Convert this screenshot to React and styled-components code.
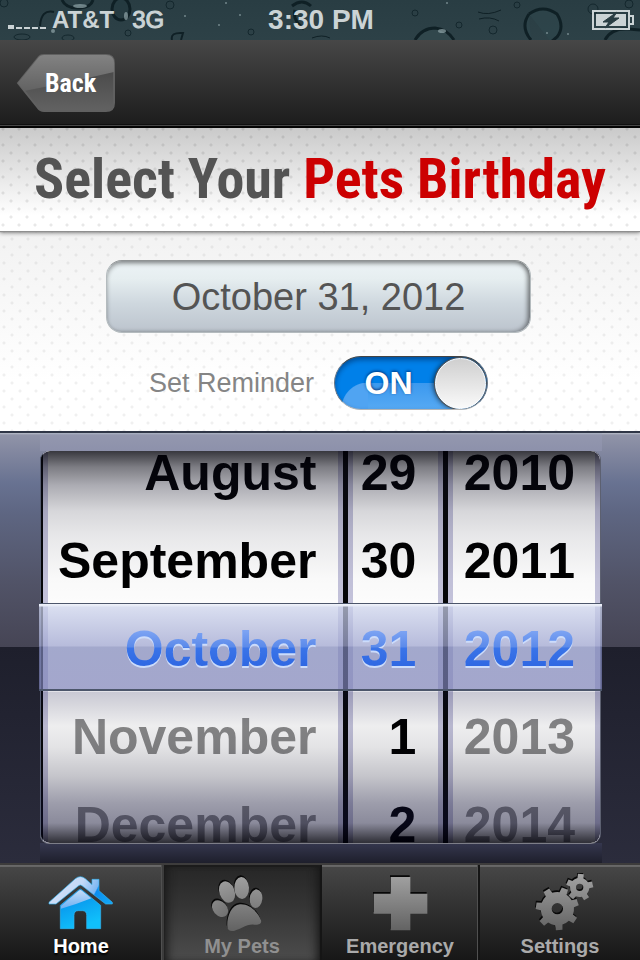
import React, { useState } from "react";
import styled, { createGlobalStyle, css } from "styled-components";

const GlobalStyle = createGlobalStyle`
  *, *::before, *::after { box-sizing: border-box; }
  body { margin: 0; background: #1b1b1b; font-family: "Liberation Sans", Arial, sans-serif; }
  button, input { font-family: inherit; margin: 0; padding: 0; border: 0; }
`;

const condensed = `"Roboto Condensed", "Open Sans Condensed", "Arial Narrow", "Liberation Sans", sans-serif`;

const Screen = styled.div`
  display: flex;
  flex-direction: column;
  min-height: 100vh;
  overflow: hidden;
`;

/* ---------- status bar ---------- */

const StatusBar = styled.div`
  position: relative;
  display: grid;
  grid-template-columns: 1fr auto 1fr;
  align-items: center;
  height: 40px;
  padding: 0 6px 0 8px;
  background: linear-gradient(#293d43, #2d4147);
  color: #cbd3d5;
  font-weight: bold;
  overflow: hidden;
`;

const Droplets = styled.svg`
  position: absolute;
  inset: 0;
  width: 100%;
  height: 100%;
`;

const Carrier = styled.div`
  position: relative;
  display: flex;
  align-items: center;
  gap: 6px;
  font-size: 24px;
`;

const Network = styled.span`
  margin-left: 12px;
  font-weight: normal;
  -webkit-text-stroke: 1px currentColor;
`;

const Signal = styled.div`
  display: flex;
  align-items: flex-end;
  gap: 2px;
  height: 18px;
`;

const SignalBar = styled.i`
  width: 6px;
  height: ${(p) => (p.$on ? 4 : 2)}px;
  background: #cbd3d5;
`;

const Clock = styled.div`
  position: relative;
  font-size: 28px;
  line-height: 40px;
`;

const Battery = styled.svg`
  position: relative;
  justify-self: end;
  width: 42px;
  height: 20px;
`;

/* ---------- navigation ---------- */

const NavBar = styled.header`
  display: flex;
  align-items: center;
  height: 88px;
  padding: 0 16px 3px;
  background: linear-gradient(#474747, #333 45%, #1b1b1b);
  box-shadow: inset 0 -2px #050505, inset 0 -3px #484848, inset 0 -4px #101010;
`;

const BackButton = styled.button`
  position: relative;
  width: 99px;
  height: 58px;
  background: none;
  color: #fff;
  font: bold 26px/58px ${condensed};
  cursor: pointer;
`;

const BackShape = styled.svg`
  position: absolute;
  inset: 0;
  width: 100%;
  height: 100%;
`;

const BackText = styled.span`
  position: relative;
  display: block;
  padding-left: 10px;
`;

/* ---------- heading and form ---------- */

const dots = (alpha, x, y) => css`
  background-image:
    radial-gradient(circle at 8px 8px, rgba(0, 0, 0, ${alpha}) 1px, transparent 2px),
    radial-gradient(circle at 8px 8px, rgba(0, 0, 0, ${alpha}) 1px, transparent 2px),
    ${(p) => p.$shade};
  background-size: 16px 16px, 16px 16px, 100% 100%;
  background-position: ${x}px ${y}px, ${x + 8}px ${y + 8}px, 0 0;
`;

const TitleBand = styled.div`
  ${dots(0.09, 3, 1)}
  position: relative;
  display: flex;
  justify-content: center;
  height: 103px;
  box-shadow: 0 1px 1px #8f8f8f, 0 2px 4px rgba(0, 0, 0, 0.45);
`;

const Title = styled.h1`
  margin: 0;
  color: #545454;
  font: bold 56px/103px ${condensed};
  white-space: nowrap;
`;

const Accent = styled.span`
  color: #cc0001;
`;

const Form = styled.main`
  ${dots(0.06, 4, 0)}
  display: flex;
  flex-direction: column;
  align-items: center;
  gap: 23px;
  padding: 29px 19px 21px 16px;
`;

const DateField = styled.input`
  width: 425px;
  max-width: 100%;
  height: 73px;
  padding-top: 2px;
  border-radius: 16px;
  border: 1px solid #b4bbbe;
  border-top-color: #8f9394;
  background: linear-gradient(#ecf3f6, #e6eef0 25%, #ced7de 60%, #bcc4cd);
  box-shadow: inset 0 3px 4px rgba(0, 0, 0, 0.3), inset -3px 0 4px rgba(0, 0, 0, 0.35);
  color: #545454;
  font-size: 38px;
  text-align: center;
  outline: 0;
`;

const ReminderRow = styled.div`
  display: flex;
  align-items: center;
  gap: 20px;
`;

const ReminderLabel = styled.label`
  color: #858585;
  font-size: 27px;
  line-height: 54px;
`;

const Toggle = styled.input`
  appearance: none;
  display: flex;
  align-items: center;
  justify-content: flex-end;
  width: 154px;
  height: 54px;
  padding: 1px;
  border-radius: 27px;
  border: 1px solid #6c7683;
  border-top-color: #444;
  border-bottom-color: #b5b5b5;
  overflow: hidden;
  background:
    radial-gradient(circle at 100% 100%, #50a4f2 26px, transparent 27px) 7px 26px / 26px 26px no-repeat,
    linear-gradient(#3b99ef, #56a9f3) 33px 26px / 100% 26px no-repeat,
    #0080e9;
  box-shadow: inset 0 3px 5px rgba(0, 20, 60, 0.45);
  cursor: pointer;

  &::before {
    content: "${(p) => (p.checked ? "ON" : "OFF")}";
    flex: 1;
    padding-left: 6px;
    color: #fff;
    font-size: 32px;
    font-weight: bold;
    text-align: center;
    text-shadow: 0 -1px 3px rgba(0, 30, 90, 0.8);
  }
  &::after {
    content: "";
    width: 51px;
    height: 51px;
    border-radius: 50%;
    border: 1px solid #fff;
    background: linear-gradient(#cfcfcf, #fafafa);
    box-shadow: 0 0 0 1px #555, -2px 0 5px rgba(0, 0, 0, 0.6);
  }
`;

/* ---------- date picker ---------- */

const Picker = styled.section`
  flex: 1 0 auto;
  display: flex;
  padding: 0 38px 0 40px;
  border-top: 2px solid #2f3646;
  background: linear-gradient(
    #b9bfcb 0,
    #9094a8 2px,
    #8388a0 18px,
    #687291 50px,
    #5e6682 80px,
    #515367 150px,
    #464555 214px,
    #1e1f2c 214px,
    #2b2c3c 100%
  );
`;

const PickerFrame = styled.div`
  position: relative;
  flex: 1;
  min-width: 0;
  padding: 18px 2px 20px 0;
  background:
    linear-gradient(#aeb5c4 0, #9397ae 2px, #8d91ab 18px, transparent 18px),
    linear-gradient(to top, #1e1f2c 0, #35374e 20px, transparent 20px);
`;

const Wheels = styled.div`
  display: grid;
  grid-template-columns: minmax(0, 301fr) minmax(0, 95fr) minmax(0, 152fr);
  gap: 5px;
  height: 392px;
  padding: 0 0 0 2px;
  border-left: 1px solid #555c70;
  border-radius: 9px;
  overflow: hidden;
  background: #050608;
  box-shadow: 0 1px #7d7e88, 1px 0 #5c6070;
  position: relative;

  &::after {
    content: "";
    position: absolute;
    inset: 0;
    border-radius: 9px;
    pointer-events: none;
    background: linear-gradient(
      rgba(0, 0, 8, 0.78) 0,
      rgba(8, 8, 20, 0.52) 16px,
      rgba(15, 15, 35, 0.34) 34px,
      rgba(20, 20, 40, 0.16) 60px,
      rgba(20, 20, 40, 0.09) 84px,
      rgba(0, 0, 0, 0.01) 128px,
      transparent 152px,
      transparent 240px,
      rgba(20, 20, 70, 0.22) 241px,
      rgba(20, 20, 60, 0.16) 254px,
      rgba(10, 10, 30, 0.06) 275px,
      rgba(10, 10, 30, 0.1) 296px,
      rgba(15, 15, 40, 0.23) 325px,
      rgba(15, 15, 50, 0.4) 352px,
      rgba(15, 15, 50, 0.48) 372px,
      rgba(0, 0, 10, 0.8) 391px
    );
  }
`;

const Wheel = styled.ul`
  margin: 0;
  padding: 0;
  list-style: none;
  border: solid #c3c2da;
  border-width: 0 5px;
  background: #fcfcfc;
`;

const Item = styled.li`
  height: 88px;
  &:first-child { margin-top: -22px; }
`;

const ItemButton = styled.button`
  position: relative;
  z-index: ${(p) => (p.$selected ? 2 : 0)};
  display: block;
  width: 100%;
  height: 88px;
  background: none;
  color: ${(p) => (p.$dim ? "#8a8a8a" : "#000")};
  font-size: 50px;
  font-weight: bold;
  font-kerning: none;
  line-height: 88px;
  text-align: right;
  white-space: nowrap;
  cursor: pointer;
  padding: 0 ${(p) => p.$pad}px 0 0;

  ${(p) =>
    p.$selected &&
    css`
      color: transparent;
      background: linear-gradient(#7ca3f3 26px, #5b8aea 42px, #3a74e8 43px, #2d66e2 64px);
      background-clip: text;
      filter: drop-shadow(0 2px 0 #ccdcfb);
    `}
`;

const Highlight = styled.div`
  position: absolute;
  z-index: 1;
  left: -1px;
  right: 0;
  top: 170px;
  height: 88px;
  border-top: 1px solid #4c566b;
  border-bottom: 2px solid #4c566b;
  pointer-events: none;
  background: linear-gradient(
    #f0f3fb 0,
    #e6eaf6 2px,
    rgba(204, 211, 236, 0.72) 3px,
    rgba(160, 166, 208, 0.75) 42px,
    rgba(125, 133, 184, 0.7) 43px,
    rgba(126, 130, 184, 0.7) 100%
  );
`;

/* ---------- tab bar ---------- */

const TabBar = styled.nav`
  display: grid;
  grid-template-columns: 164fr 158fr 158fr 160fr;
  height: 97px;
  border-top: 2px solid #3d3c3c;
  box-shadow: inset 0 2px #656565;
  background: linear-gradient(#474747, #313131 45%, #171717);
`;

const Tab = styled.button`
  display: flex;
  flex-direction: column;
  align-items: center;
  gap: 2px;
  padding: 8px 0 0;
  border-right: 2px solid #151515;
  box-shadow: inset -1px 0 #505050, inset 0 1px #686868;
  background: none;
  color: #aaa;
  font-size: 20px;
  font-weight: bold;
  line-height: 26px;
  cursor: pointer;

  &:last-child { border-right: 0; box-shadow: inset 0 1px #686868; }

  ${(p) =>
    p.$bright &&
    css`
      color: #fff;
      text-shadow: 0 2px 2px #000;
      border-right-color: #3c3c3c;
    `}
  ${(p) =>
    p.$pressed &&
    css`
      color: #909090;
      background: linear-gradient(#262626, #353535 45%, #4c4c4c);
      box-shadow: inset 0 2px 1px #1b1b1b, inset 8px 0 10px -5px #181818, inset -8px 0 10px -5px #181818;
    `}
`;

const TabIcon = styled.svg`
  width: 68px;
  height: 58px;
`;

/* ---------- drawings ---------- */

const gearPath = (cx, cy, outer, inner, hole, teeth, start) => {
  const step = 360 / teeth;
  const at = (deg, r) => {
    const a = (deg * Math.PI) / 180;
    return `${(cx + r * Math.cos(a)).toFixed(1)} ${(cy + r * Math.sin(a)).toFixed(1)}`;
  };
  const parts = [];
  for (let i = 0; i < teeth; i += 1) {
    const m = start + i * step;
    parts.push(`${i ? "L" : "M"}${at(m - step * 0.25, inner)} L${at(m - step * 0.17, outer)}`);
    parts.push(`L${at(m + step * 0.17, outer)} L${at(m + step * 0.25, inner)}`);
    parts.push(`A${inner} ${inner} 0 0 1 ${at(m + step * 0.75, inner)}`);
  }
  return `${parts.join(" ")}Z M${cx - hole} ${cy}a${hole} ${hole} 0 1 0 ${hole * 2} 0a${hole} ${hole} 0 1 0 ${-hole * 2} 0Z`;
};

const HiddenSvg = styled.svg`
  position: absolute;
  width: 0;
  height: 0;
`;

const Defs = () => (
  <HiddenSvg aria-hidden="true">
    <defs>
      <linearGradient id="steel" gradientUnits="userSpaceOnUse" x1="0" y1="60" x2="0" y2="228">
        <stop offset="0" stopColor="#a2a2a2" />
        <stop offset="1" stopColor="#626262" />
      </linearGradient>
      <linearGradient id="roof" gradientUnits="userSpaceOnUse" x1="150" y1="60" x2="320" y2="150">
        <stop offset="0" stopColor="#d5e1f7" />
        <stop offset="0.5" stopColor="#c3d9f7" />
        <stop offset="0.74" stopColor="#7db7f2" />
        <stop offset="0.76" stopColor="#0a8df0" />
        <stop offset="1" stopColor="#12a4f4" />
      </linearGradient>
      <linearGradient id="wall" x1="0" y1="0" x2="0.4" y2="1">
        <stop offset="0" stopColor="#0583e6" />
        <stop offset="1" stopColor="#10c0fb" />
      </linearGradient>
      <linearGradient id="wallShine" x1="0" y1="0" x2="0" y2="1">
        <stop offset="0" stopColor="#c5dcf8" />
        <stop offset="1" stopColor="#6cb0f2" />
      </linearGradient>
    </defs>
  </HiddenSvg>
);

const Embossed = ({ children }) => (
  <>
    <g fill="#080808" fillRule="evenodd" transform="translate(-2 -5)">{children}</g>
    <g fill="url(#steel)" fillRule="evenodd">{children}</g>
  </>
);

const HomeIcon = () => (
  <TabIcon viewBox="141 54 204 174" aria-hidden="true">
    <g stroke="#35b3f0" strokeWidth="2" strokeLinejoin="round">
      <path
        fill="url(#roof)"
        d="M147 142 L226 71 Q241 59 256 71 L276 89 V73 H297 V107 L337 142 V147 H317 L246 92 Q241 88 236 92 L168 147 H147Z"
      />
      <path fill="url(#wall)" d="M181 151 L236 105 Q241 100 246 105 L302 151 V221 H260 V181 Q260 167 247 167 H235 Q222 167 222 181 V221 H181Z" />
    </g>
    <path fill="url(#wallShine)" d="M183 152 L236 107 Q241 103 246 107 L274 130 Q230 148 183 161Z" />
  </TabIcon>
);

const PawShapes = () => (
  <>
    <ellipse cx="683" cy="111" rx="23" ry="33" transform="rotate(-20 683 111)" />
    <ellipse cx="727" cy="99" rx="22" ry="33" transform="rotate(-3 727 99)" />
    <ellipse cx="770" cy="131" rx="19" ry="28" transform="rotate(6 770 131)" />
    <ellipse cx="662" cy="161" rx="21" ry="28" transform="rotate(-42 662 161)" />
    <path d="M684 215 C682 190 694 150 722 148 C752 146 778 174 785 196 C788 209 776 210 764 209 C740 207 727 222 706 227 C692 230 685 225 684 215Z" />
  </>
);

const PawIcon = () => (
  <TabIcon viewBox="626 54 204 174" aria-hidden="true">
    <Embossed><PawShapes /></Embossed>
  </TabIcon>
);

const CrossIcon = () => (
  <TabIcon viewBox="143 54 204 174" aria-hidden="true">
    <Embossed><path d="M217 66 H276 V116 H327 V176 H276 V226 H217 V176 H166 V116 H217Z" /></Embossed>
  </TabIcon>
);

const GearsIcon = () => (
  <TabIcon viewBox="618 54 204 174" aria-hidden="true">
    <Embossed>
      <path d={gearPath(712, 161, 65, 50, 17, 7, 85)} />
      <path d={gearPath(779, 97, 41, 29, 11, 5, -85)} />
    </Embossed>
  </TabIcon>
);

const Rain = () => (
  <Droplets viewBox="0 0 640 40" preserveAspectRatio="xMidYMid slice" aria-hidden="true">
    <g fill="none" stroke="#09191e" strokeWidth="3" opacity="0.8">
      <path d="M62 0 Q66 9 80 8 Q91 7 93 0" />
      <ellipse cx="121" cy="9" rx="9" ry="11" fill="#243a40" />
      <path d="M40 26 Q41 9 54 12 M172 40 Q170 32 183 33 L181 40" strokeWidth="2" />
      <path d="M292 6 Q302 -2 311 6 M295 10 Q292 20 304 29" />
      <path d="M529 14 Q543 4 557 14 Q565 27 557 37 L551 42 M529 14 Q520 27 531 40" fill="#2e454b" />
      <path d="M415 40 Q422 28 435 28 Q447 29 454 40" fill="#33494e" />
      <path d="M605 40 Q611 28 628 29 L640 30" />
      <path d="M478 12 Q488 16 501 10 M479 19 Q490 16 499 21 M312 38 Q322 34 330 38 M347 11 Q339 8 337 18" strokeWidth="1" />
    </g>
    <g fill="none" stroke="#14272d">
      <circle cx="170" cy="5" r="4" />
      <circle cx="415" cy="13" r="3" />
      <circle cx="128" cy="33" r="3" />
      <ellipse cx="22" cy="37" rx="8" ry="3" />
      <ellipse cx="68" cy="38" rx="6" ry="3" />
      <circle cx="251" cy="32" r="3" />
      <circle cx="493" cy="30" r="4" />
      <circle cx="517" cy="5" r="3" />
      <circle cx="459" cy="25" r="3" />
      <circle cx="593" cy="9" r="5" />
      <circle cx="629" cy="4" r="4" />
      <circle cx="4" cy="3" r="4" />
    </g>
    <g fill="#90a5a9" opacity="0.7">
      <ellipse cx="80" cy="6" rx="7" ry="2" />
      <ellipse cx="126" cy="16" rx="2" ry="4" />
      <ellipse cx="442" cy="31" rx="4" ry="2" />
      <circle cx="53" cy="31" r="2" />
      <circle cx="226" cy="3" r="1" />
      <circle cx="219" cy="25" r="1" />
      <circle cx="185" cy="16" r="1" />
      <circle cx="447" cy="3" r="1" />
      <circle cx="547" cy="33" r="1" />
      <circle cx="568" cy="34" r="1" />
      <circle cx="240" cy="15" r="1" />
    </g>
  </Droplets>
);

/* ---------- data ---------- */

const wheels = [
  { name: "Month", inset: 22, items: ["August", "September", "October", "November", "December"], dimAfter: 2 },
  { name: "Day", inset: 22, items: ["29", "30", "31", "1", "2"], dimAfter: 9 },
  { name: "Year", inset: 20, items: ["2010", "2011", "2012", "2013", "2014"], dimAfter: 2 },
];

const tabs = [
  { label: "Home", Icon: HomeIcon, bright: true },
  { label: "My Pets", Icon: PawIcon, pressed: true },
  { label: "Emergency", Icon: CrossIcon },
  { label: "Settings", Icon: GearsIcon },
];

export default function App() {
  const [reminder, setReminder] = useState(true);

  return (
    <Screen>
      <GlobalStyle />
      <Defs />
      <StatusBar>
        <Rain />
        <Carrier>
          <Signal>
            {[true, false, false, false, false].map((on, i) => (
              <SignalBar key={i} $on={on} />
            ))}
          </Signal>
          <span>AT&amp;T</span>
          <Network>3G</Network>
        </Carrier>
        <Clock>3:30 PM</Clock>
        <Battery viewBox="0 0 42 20" aria-label="Battery charging">
          <path fill="none" stroke="#cbd3d5" strokeWidth="2" d="M1 1H37V19H1ZM38 6H41V14H38" />
          <path fill="#cbd3d5" d="M4 4H34V16H4Z" />
          <path fill="#293d43" stroke="#293d43" strokeLinejoin="round" d="M25 2L11 12H17L13 18L27 8H21Z" />
        </Battery>
      </StatusBar>

      <NavBar>
        <BackButton type="button">
          <BackShape viewBox="0 0 99 58" aria-hidden="true">
            <defs>
              <linearGradient id="backLow" x1="0" y1="0" x2="0" y2="1">
                <stop offset="0.3" stopColor="#4b4b4b" />
                <stop offset="1" stopColor="#626262" />
              </linearGradient>
              <linearGradient id="backHigh" x1="0" y1="0" x2="0" y2="1">
                <stop offset="0" stopColor="#828282" />
                <stop offset="1" stopColor="#626262" />
              </linearGradient>
            </defs>
            <path fill="url(#backLow)" stroke="#606060" strokeWidth="2" d="M2 29 L22 4 Q24 1 28 1 H90 Q98 1 98 9 V49 Q98 57 90 57 H28 Q24 57 22 54Z" />
            <path fill="url(#backHigh)" d="M2 29 L22 4 Q24 1 28 1 H90 Q98 1 98 9 V18 Q55 28 8 37Z" />
          </BackShape>
          <BackText>Back</BackText>
        </BackButton>
      </NavBar>

      <TitleBand $shade="linear-gradient(#cacaca, #ffffff 85%)">
        <Title>
          Select Your <Accent>Pets Birthday</Accent>
        </Title>
      </TitleBand>

      <Form $shade="linear-gradient(#f2f2f2, #ffffff 75%)">
        <DateField type="text" aria-label="Birthday" value="October 31, 2012" readOnly />
        <ReminderRow>
          <ReminderLabel htmlFor="reminder">Set Reminder</ReminderLabel>
          <Toggle id="reminder" type="checkbox" checked={reminder} onChange={(e) => setReminder(e.target.checked)} />
        </ReminderRow>
      </Form>

      <Picker>
        <PickerFrame>
          <Wheels>
            {wheels.map((wheel) => (
              <Wheel key={wheel.name} aria-label={wheel.name}>
                {wheel.items.map((item, i) => (
                  <Item key={item}>
                    <ItemButton type="button" $selected={i === 2} $dim={i > wheel.dimAfter} $pad={wheel.inset}>
                      {item}
                    </ItemButton>
                  </Item>
                ))}
              </Wheel>
            ))}
          </Wheels>
          <Highlight />
        </PickerFrame>
      </Picker>

      <TabBar>
        {tabs.map(({ label, Icon, bright, pressed }) => (
          <Tab key={label} type="button" $bright={bright} $pressed={pressed}>
            <Icon />
            {label}
          </Tab>
        ))}
      </TabBar>
    </Screen>
  );
}
